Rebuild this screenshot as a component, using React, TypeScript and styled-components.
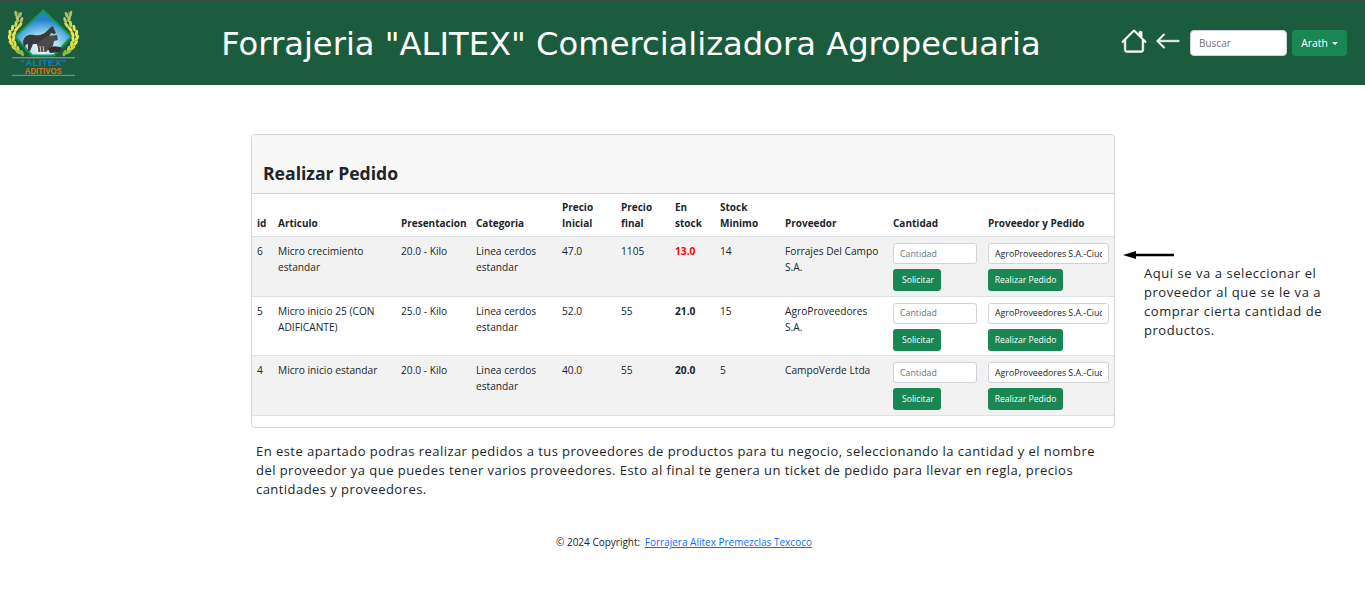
import React from "react";
import styled, { createGlobalStyle } from "styled-components";
import { BsHouse, BsArrowLeft } from "react-icons/bs";

const Global = createGlobalStyle`
  html, body { margin: 0; padding: 0; background: #fff; }
  body { font-family: "Open Sans", "Noto Sans", sans-serif; font-size: 12px; color: #212529; }
  * { box-sizing: border-box; }
`;

const Page = styled.div`
  width: 1365px;
  min-height: 599px;
  display: flex;
  flex-direction: column;
  overflow: hidden;
`;

const Navbar = styled.header`
  height: 85px;
  background: #1b5c3e;
  border-top: 1px solid #3b4a44;
  display: flex;
  align-items: center;
  padding: 0 18px 0 8px;
`;

const Logo = styled.svg`
  width: 72px;
  height: 76px;
  flex: none;
`;

const Title = styled.h1`
  flex: 1;
  margin: 2px 0 0;
  padding-left: 62px;
  text-align: center;
  font-family: "DejaVu Sans", sans-serif;
  font-weight: 400;
  font-size: 32.2px;
  color: #fff;
  white-space: nowrap;
`;

const NavActions = styled.div`
  display: flex;
  align-items: center;
  color: #fff;
  flex: none;
`;

const HomeLink = styled.a`
  display: flex;
  margin: 0 8px 4px 1px;
  font-size: 26px;
  color: #fff;
  & svg { stroke: #fff; stroke-width: 0.35px; }
`;

const BackLink = styled.a`
  display: flex;
  margin: 0 9px 5px 0;
  font-size: 26px;
  color: #fff;
  & svg { stroke: #fff; stroke-width: 0.3px; }
`;

const Search = styled.input`
  width: 97px;
  height: 26px;
  border: 1px solid #ced4da;
  border-radius: 4px;
  padding: 0 8px;
  font: 10px "Open Sans", sans-serif;
  background: #fff;
  margin-right: 5px;
  &::placeholder { color: #6c757d; opacity: 1; }
`;

const UserButton = styled.button`
  width: 55px;
  height: 26px;
  border: 0;
  border-radius: 4px;
  background: #198754;
  color: #fff;
  font: 10.4px "Open Sans", sans-serif;
  display: flex;
  align-items: center;
  justify-content: center;
  gap: 4px;
  padding: 0;
  &::after {
    content: "";
    border-top: 3px solid #fff;
    border-left: 3px solid transparent;
    border-right: 3px solid transparent;
  }
`;

const Main = styled.main`
  width: 864px;
  margin: 49px 0 0 251px;
`;

const Card = styled.section`
  border: 1px solid #d3d4d5;
  border-radius: 4px;
  padding-bottom: 11.4px;
  overflow: hidden;
`;

const CardHeader = styled.div`
  height: 59px;
  background: #f7f7f7;
  border-bottom: 1px solid #d3d4d5;
  padding: 25px 11px 0;
`;

const CardTitle = styled.h2`
  margin: 0;
  font-size: 17.6px;
  line-height: 26px;
  font-weight: 700;
  color: #212529;
`;

const Table = styled.table`
  width: 862px;
  table-layout: fixed;
  border-collapse: collapse;
  font-size: 10.2px;
  line-height: 16px;
`;

const Col = styled.col<{ $w: number }>`
  width: ${(p) => p.$w}px;
`;

const Th = styled.th`
  padding: 5px 5px 5px;
  text-align: left;
  vertical-align: bottom;
  font-weight: 700;
  font-size: 10px;
  border-bottom: 1px solid #dee2e6;
`;

const Row = styled.tr<{ $striped: boolean }>`
  background: ${(p) => (p.$striped ? "#f2f2f2" : "#fff")};
`;

const Td = styled.td`
  padding: 6px 5px 4.6px;
  vertical-align: top;
  border-bottom: 1px solid #dee2e6;
`;

const Stock = styled.strong<{ $low: boolean }>`
  font-weight: 700;
  color: ${(p) => (p.$low ? "#ff0000" : "#212529")};
`;

const Field = styled.input<{ $w: number }>`
  display: block;
  width: ${(p) => p.$w}px;
  height: 21px;
  border: 1px solid #ced4da;
  border-radius: 3px;
  background: #fff;
  padding: 0 6px;
  margin-bottom: 5px;
  font: 8.8px "Open Sans", sans-serif;
  color: #212529;
  &::placeholder { color: #6c757d; opacity: 1; }
`;

const ActionButton = styled.button<{ $w: number; $inset?: number }>`
  display: block;
  width: ${(p) => p.$w}px;
  height: 22px;
  border: 0;
  border-radius: 3px;
  background: #198754;
  color: #fff;
  padding: 0 0 0 ${(p) => p.$inset ?? 0}px;
  font: 500 8.6px "Open Sans", sans-serif;
`;

const Description = styled.p`
  margin: 14px 0 0 5px;
  width: 855px;
  font-size: 13px;
  line-height: 19px;
  letter-spacing: 0.45px;
  color: #212529;
`;

const Annotation = styled.aside`
  position: absolute;
  left: 1122px;
  top: 248px;
  width: 204px;
`;

const ArrowMark = styled.svg`
  display: block;
  width: 54px;
  height: 12px;
`;

const Note = styled.p`
  margin: 4px 0 0 22px;
  font-size: 13px;
  line-height: 19px;
  letter-spacing: 0.55px;
  color: #212529;
`;

const Footer = styled.footer`
  margin-top: 35px;
  padding-left: 556px;
  font-size: 10px;
  line-height: 16px;
`;

const FooterLink = styled.a`
  margin-left: 2px;
  color: #0d6efd;
  text-decoration: underline;
`;

const rows = [
  { id: 6, a: "Micro crecimiento estandar", p: "20.0 - Kilo", c: "Linea cerdos estandar", pi: "47.0", pf: "1105", s: "13.0", low: true, m: "14", v: "Forrajes Del Campo S.A." },
  { id: 5, a: "Micro inicio 25 (CON ADIFICANTE)", p: "25.0 - Kilo", c: "Linea cerdos estandar", pi: "52.0", pf: "55", s: "21.0", low: false, m: "15", v: "AgroProveedores S.A." },
  { id: 4, a: "Micro inicio estandar", p: "20.0 - Kilo", c: "Linea cerdos estandar", pi: "40.0", pf: "55", s: "20.0", low: false, m: "5", v: "CampoVerde Ltda" },
];

const widths = [21, 123, 75, 86, 59, 54, 45, 65, 108, 95, 131];

const grains: [number, number, number, string][] = [
  [18, 14, 5, "#a9bb72"],
  [19.5, 19, 0, "#b9c463"],
  [18, 24, 20, "#d5d655"],
  [14.5, 28, 20, "#e6e254"],
  [12, 33, 10, "#ece750"],
  [11.5, 38, -8, "#ece750"],
  [13, 43, -22, "#e3df4c"],
  [16, 48, -32, "#cfd645"],
  [20, 52, -42, "#8fbf3c"],
];

const Wheat = ({ flip }: { flip?: boolean }) => (
  <g transform={flip ? "translate(86.6 0) scale(-1 1)" : undefined}>
    <path d="M18 12 C21 20 15 24 12 29 C8 37 12 47 23 56" fill="none" stroke="#7f9a45" strokeWidth="1.2" />
    {grains.map(([x, y, r, c]) => (
      <g key={y}>
        <ellipse cx={x - 2} cy={y} rx="1.5" ry="3.2" fill={c} transform={`rotate(${r - 16} ${x - 2} ${y})`} />
        <ellipse cx={x + 2} cy={y + 1} rx="1.5" ry="3.2" fill={c} transform={`rotate(${r + 18} ${x + 2} ${y + 1})`} />
      </g>
    ))}
  </g>
);

export default function App() {
  return (
    <Page>
      <Global />
      <Navbar>
        <Logo viewBox="8 5 72 76" role="img" aria-label="Alitex Aditivos">
          <defs>
            <radialGradient id="sky" cx="50%" cy="82%" r="62%">
              <stop offset="0%" stopColor="#ffffff" />
              <stop offset="45%" stopColor="#a9dcf2" />
              <stop offset="100%" stopColor="#2183c9" />
            </radialGradient>
          </defs>
          <path d="M43.3 10.5 L71.5 36.5 L54 55.5 L32 55.5 L15 36.5 Z" fill="url(#sky)" stroke="#12994c" strokeWidth="2" />
          <Wheat />
          <Wheat flip />
          <path d="M23 42 C24 36 28 34 34 35 C40 36 44 34 47 31 L51 27 L53 26 L54 29 L56 33 L54 34 L51 33 L49 37 L47 42 L46 51 L44 51 L43 44 L33 44 L30 51 L28 51 L28 44 C26 44 25 46 24 48 Z" fill="#3a3a3c" />
          <path d="M37 44 L43 39 L48 36 L57 35 L58 40 L54 41 L53 46 L50 48 L46 52 L38 52 Z" fill="#4a4b4d" />
          <path d="M37 46 L38 52 M40 46 L41 52 M43 46 L44 52" stroke="#fff" strokeWidth="0.7" />
          <path d="M48 49 C52 45 58 46 62 48 L60 52 L50 53 Z" fill="#2f3032" />
          <rect x="12" y="57" width="63" height="1.4" fill="#7c8b84" />
          <text x="43.3" y="66" textAnchor="middle" textLength="46" lengthAdjust="spacingAndGlyphs" fontFamily="Liberation Sans, sans-serif" fontSize="8.5" fontWeight="700" fill="#1f78b4">"ALITEX"</text>
          <text x="43.3" y="74" textAnchor="middle" textLength="37" lengthAdjust="spacingAndGlyphs" fontFamily="Liberation Sans, sans-serif" fontSize="9" fontWeight="700" fill="#e0711a">ADITIVOS</text>
          <rect x="12" y="74.8" width="63" height="1.2" fill="#7c8b84" />
        </Logo>
        <Title>Forrajeria "ALITEX" Comercializadora Agropecuaria</Title>
        <NavActions>
          <HomeLink aria-label="Inicio"><BsHouse /></HomeLink>
          <BackLink aria-label="Volver"><BsArrowLeft /></BackLink>
          <Search placeholder="Buscar" />
          <UserButton>Arath</UserButton>
        </NavActions>
      </Navbar>
      <Main>
        <Card>
          <CardHeader><CardTitle>Realizar Pedido</CardTitle></CardHeader>
          <Table>
            <colgroup>
              {widths.map((w, i) => <Col key={i} $w={w} />)}
            </colgroup>
            <thead>
              <tr>
                <Th>id</Th><Th>Articulo</Th><Th>Presentacion</Th><Th>Categoria</Th>
                <Th>Precio Inicial</Th><Th>Precio final</Th><Th>En stock</Th><Th>Stock Minimo</Th>
                <Th>Proveedor</Th><Th>Cantidad</Th><Th>Proveedor y Pedido</Th>
              </tr>
            </thead>
            <tbody>
              {rows.map((r, i) => (
                <Row key={r.id} $striped={i % 2 === 0}>
                  <Td>{r.id}</Td><Td>{r.a}</Td><Td>{r.p}</Td><Td>{r.c}</Td><Td>{r.pi}</Td><Td>{r.pf}</Td>
                  <Td><Stock $low={r.low}>{r.s}</Stock></Td><Td>{r.m}</Td><Td>{r.v}</Td>
                  <Td>
                    <Field $w={84} placeholder="Cantidad" />
                    <ActionButton $w={48} $inset={2}>Solicitar</ActionButton>
                  </Td>
                  <Td>
                    <Field $w={121} defaultValue="AgroProveedores S.A.-Ciudad" />
                    <ActionButton $w={75}>Realizar Pedido</ActionButton>
                  </Td>
                </Row>
              ))}
            </tbody>
          </Table>
        </Card>
        <Description>
          En este apartado podras realizar pedidos a tus proveedores de productos para tu negocio, seleccionando la cantidad y el nombre del proveedor ya que puedes tener varios proveedores. Esto al final te genera un ticket de pedido para llevar en regla, precios cantidades y proveedores.
        </Description>
      </Main>
      <Annotation>
        <ArrowMark viewBox="0 0 54 12" aria-hidden="true">
          <path d="M1 7 L14 3 L14 5.8 L52 5.8 L52 8.2 L14 8.2 L14 11 Z" fill="#000" />
        </ArrowMark>
        <Note>Aqui se va a seleccionar el proveedor al que se le va a comprar cierta cantidad de productos.</Note>
      </Annotation>
      <Footer>
        © 2024 Copyright: <FooterLink href="#">Forrajera Alitex Premezclas Texcoco</FooterLink>
      </Footer>
    </Page>
  );
}
